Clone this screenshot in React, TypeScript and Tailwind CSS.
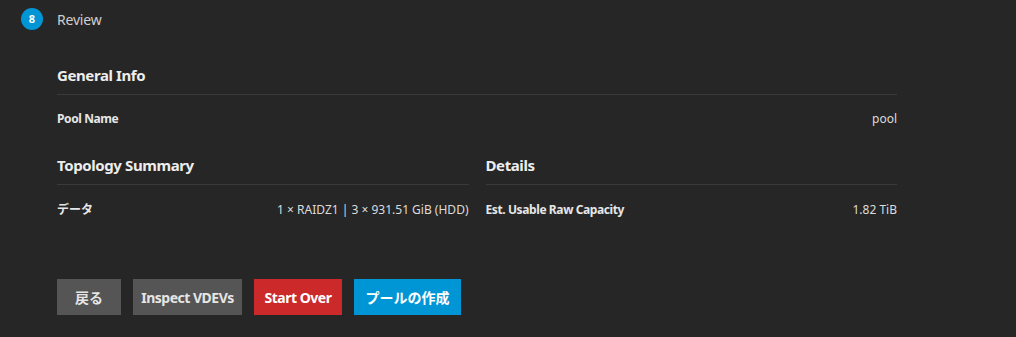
export default function App() {
  return (
    <div
      className="w-[1016px] h-[337px] bg-[#262626] text-[#e6e6e6] overflow-hidden"
      style={{ fontFamily: '"Noto Sans", "Noto Sans CJK JP", sans-serif' }}
    >
      {/* Step header */}
      <div className="flex items-center h-[38px] pl-[21px]">
        <div className="w-[22px] h-[22px] rounded-full bg-[#0095d5] flex items-center justify-center text-white text-[11px] font-bold">
          8
        </div>
        <span className="ml-[14px] text-[14px] text-[#cfcfcf] tracking-[-0.2px]">Review</span>
      </div>

      <div className="pl-[57px] pr-[119px]">
        {/* General Info */}
        <div className="mt-[23px]">
          <div className="text-[15px] font-bold text-[#ededed] leading-[28px] tracking-[-0.4px]">General Info</div>
          <div className="border-t border-[#3a3a3a] mt-[5px]" />
          <div className="flex justify-between items-center h-[47px] text-[12px]">
            <span className="font-bold tracking-[-0.4px]">Pool Name</span>
            <span className="text-[#dcdcdc]">pool</span>
          </div>
        </div>

        {/* Topology + Details */}
        <div className="grid grid-cols-2 gap-x-[17px] mt-[9px]">
          <div>
            <div className="text-[15px] font-bold text-[#ededed] leading-[28px] tracking-[-0.4px]">Topology Summary</div>
            <div className="border-t border-[#3a3a3a] mt-[5px]" />
            <div className="flex justify-between items-center h-[49px] text-[12px]">
              <span className="font-bold">データ</span>
              <span className="text-[#dcdcdc]">1 × RAIDZ1 | 3 × 931.51 GiB (HDD)</span>
            </div>
          </div>
          <div>
            <div className="text-[15px] font-bold text-[#ededed] leading-[28px] tracking-[-0.4px]">Details</div>
            <div className="border-t border-[#3a3a3a] mt-[5px]" />
            <div className="flex justify-between items-center h-[49px] text-[12px]">
              <span className="font-bold tracking-[-0.4px]">Est. Usable Raw Capacity</span>
              <span className="text-[#dcdcdc]">1.82 TiB</span>
            </div>
          </div>
        </div>

        {/* Buttons */}
        <div className="flex gap-[12px] mt-[45px] text-[14px] font-bold">
          <button className="h-[36px] w-[64px] bg-[#555555] text-[#e6e6e6]">戻る</button>
          <button className="h-[36px] w-[109px] bg-[#555555] text-[#e6e6e6] tracking-[-0.5px]">Inspect VDEVs</button>
          <button className="h-[36px] w-[88px] bg-[#cc2a2a] text-white tracking-[-0.5px]">Start Over</button>
          <button className="h-[36px] w-[107px] bg-[#0095d5] text-white">プールの作成</button>
        </div>
      </div>
    </div>
  );
}
